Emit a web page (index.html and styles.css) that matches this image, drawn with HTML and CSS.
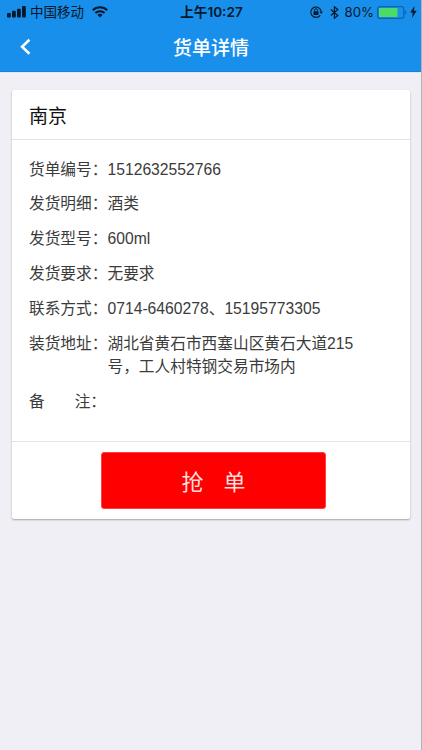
FILE: index.html
```html
<!DOCTYPE html>
<html lang="zh-CN">
<head>
<meta charset="utf-8">
<title>货单详情</title>
<link rel="stylesheet" href="styles.css">
</head>
<body>
<div class="screen">
  <header class="header">
    <div class="status">
      <div class="status-left">
        <svg class="signal" width="19" height="12" viewBox="0 0 19 12"><rect x="0" y="7" width="3.8" height="4.5" rx="1"/><rect x="5" y="4.8" width="3.8" height="6.7" rx="1"/><rect x="10" y="2.8" width="3.8" height="8.7" rx="1"/><rect x="15" y="0" width="3.8" height="11.5" rx="1"/></svg>
        <span class="carrier">中国移动</span>
        <svg class="wifi" width="16" height="12" viewBox="0 0 16 12"><g fill="none" stroke="#06192b" stroke-width="2"><path d="M.8 4.3C4.8.3 11.2.3 15.2 4.3"/><path d="M3.4 7C6 4.5 10 4.5 12.6 7"/></g><path fill="#06192b" d="M5.4 8.7c1.5-1.3 3.7-1.3 5.2 0L8 11.5z"/></svg>
      </div>
      <div class="time">上午10:27</div>
      <div class="status-right">
        <svg class="lock" width="13" height="12" viewBox="0 0 13 12"><path d="M10.2 9.3A5.2 5.2 0 1 1 11.2 5.5" fill="none" stroke="#06192b" stroke-width="1.1"/><path d="M9.3 5.4h3.7l-1.8 2.5z"/><rect x="3.5" y="5.3" width="5" height="3.6" rx=".5"/><path d="M4.5 5.5V4.3a1.5 1.5 0 0 1 3 0v1.2" fill="none" stroke="#06192b"/></svg>
        <svg class="bluetooth" width="9" height="13" viewBox="0 0 9 13"><path d="M.8 3.6l7 5.8-3.4 2.8V.8l3.4 2.8-7 5.8" fill="none" stroke="#06192b" stroke-width="1.25"/></svg>
        <span class="percent">80%</span>
        <svg class="battery" width="30" height="13" viewBox="0 0 30 13"><rect x=".7" y=".7" width="26" height="11.6" rx="2" fill="none" stroke="#0c65ad" stroke-width="1.3"/><rect x="2" y="2" width="18.5" height="9" rx=".6" fill="#4ddb67"/><path fill="#0c65ad" d="M27.8 4.3c2 .6 2 3.8 0 4.4z"/></svg>
        <svg class="bolt" width="7" height="12" viewBox="0 0 7 12"><path d="M4.4 0L.3 6.6h2.5L1.9 12 6.7 4.8H4z"/></svg>
      </div>
    </div>
    <div class="navbar">
      <svg class="back" width="11" height="18" viewBox="0 0 11 18"><path d="M9.4 1.7L2.1 8.7l7.3 7" fill="none" stroke="#fff" stroke-width="2.6"/></svg>
      <h1 class="title">货单详情</h1>
    </div>
  </header>
  <main class="card">
    <h2 class="card-title">南京</h2>
    <dl class="details">
      <div class="row"><dt>货单编号：</dt><dd>1512632552766</dd></div>
      <div class="row"><dt>发货明细：</dt><dd>酒类</dd></div>
      <div class="row"><dt>发货型号：</dt><dd>600ml</dd></div>
      <div class="row"><dt>发货要求：</dt><dd>无要求</dd></div>
      <div class="row"><dt>联系方式：</dt><dd>0714-6460278、15195773305</dd></div>
      <div class="row"><dt>装货地址：</dt><dd>湖北省黄石市西塞山区黄石大道215<br>号，工人村特钢交易市场内</dd></div>
      <div class="row"><dt class="remark">备　　注：</dt><dd></dd></div>
    </dl>
    <div class="actions"><button class="grab" type="button">抢<span class="gap"></span>单</button></div>
  </main>
</div>
</body>
</html>
```
FILE: styles.css
```css
* { box-sizing: border-box; }
body {
  margin: 0;
  background: #efeff5;
  font-family: "Liberation Sans", "Noto Sans CJK SC", sans-serif;
}
svg { display: block; flex: none; fill: #06192b; }
.screen { height: 750px; overflow: hidden; border-right: 1px solid #b2b2ba; }
.header {
  height: 72px;
  width: 422px;
  background: #198fec;
  border-bottom: 1px solid #1784da;
  box-shadow: 0 1px 0 #d9ebfb;
}
.status {
  height: 24px;
  display: grid;
  grid-template-columns: 1fr auto 1fr;
  align-items: center;
  color: #06192b;
  font: 13.5px/24px Inter, "Noto Sans CJK SC", sans-serif;
}
.status-left, .status-right { display: flex; align-items: center; white-space: nowrap; }
.status-left { padding-left: 7px; }
.status-right { justify-content: flex-end; padding-right: 5px; }
.carrier { margin: 0 8px 0 4px; }
.time { padding-left: 1px; font-size: 13.6px; font-weight: 600; }
.lock { margin-right: 7px; }
.percent { margin: 0 3px 0 6px; font-size: 13.2px; }
.battery { margin-right: 3px; }
.navbar {
  height: 47px;
  display: grid;
  grid-template-columns: 50px 1fr 50px;
  align-items: center;
}
.back { margin-left: 20px; margin-top: -3px; }
.title {
  margin: 0;
  color: #fff;
  font-size: 19px;
  font-weight: 500;
  line-height: 49px;
  text-align: center;
}
.card {
  width: 398px;
  height: 429px;
  margin: 18px 0 0 12px;
  display: flex;
  flex-direction: column;
  background: #fff;
  border-radius: 2px;
  box-shadow: 0 1px 2px rgba(0, 0, 0, .32);
}
.card-title {
  height: 50px;
  margin: 0;
  padding-left: 17px;
  border-bottom: 1px solid #e3e3e6;
  color: #111;
  font-size: 19px;
  font-weight: 400;
  line-height: 53px;
}
.details {
  flex: 1;
  margin: 0;
  padding: 17.6px 17px 0;
  display: flex;
  flex-direction: column;
  gap: 11px;
  color: #3b3b3b;
  font-size: 15.7px;
  line-height: 23.8px;
}
.row { display: flex; min-height: 23.8px; }
dt { flex: none; width: 78.5px; white-space: nowrap; }
.remark { letter-spacing: -.4px; }
dd { margin: 0; white-space: nowrap; }
.actions {
  height: 78px;
  padding-top: 10px;
  border-top: 1px solid #e3e3e6;
  display: flex;
  justify-content: center;
  align-items: flex-start;
}
.grab {
  width: 225px;
  height: 57px;
  margin-left: 5px;
  padding: 0;
  border: 1px solid #ff4040;
  border-radius: 3px;
  background: #f00;
  color: #ffdede;
  font-family: "Noto Sans CJK SC", sans-serif;
  font-size: 22px;
  font-weight: 400;
  line-height: 53px;
}
.gap { display: inline-block; width: 20px; }
```
